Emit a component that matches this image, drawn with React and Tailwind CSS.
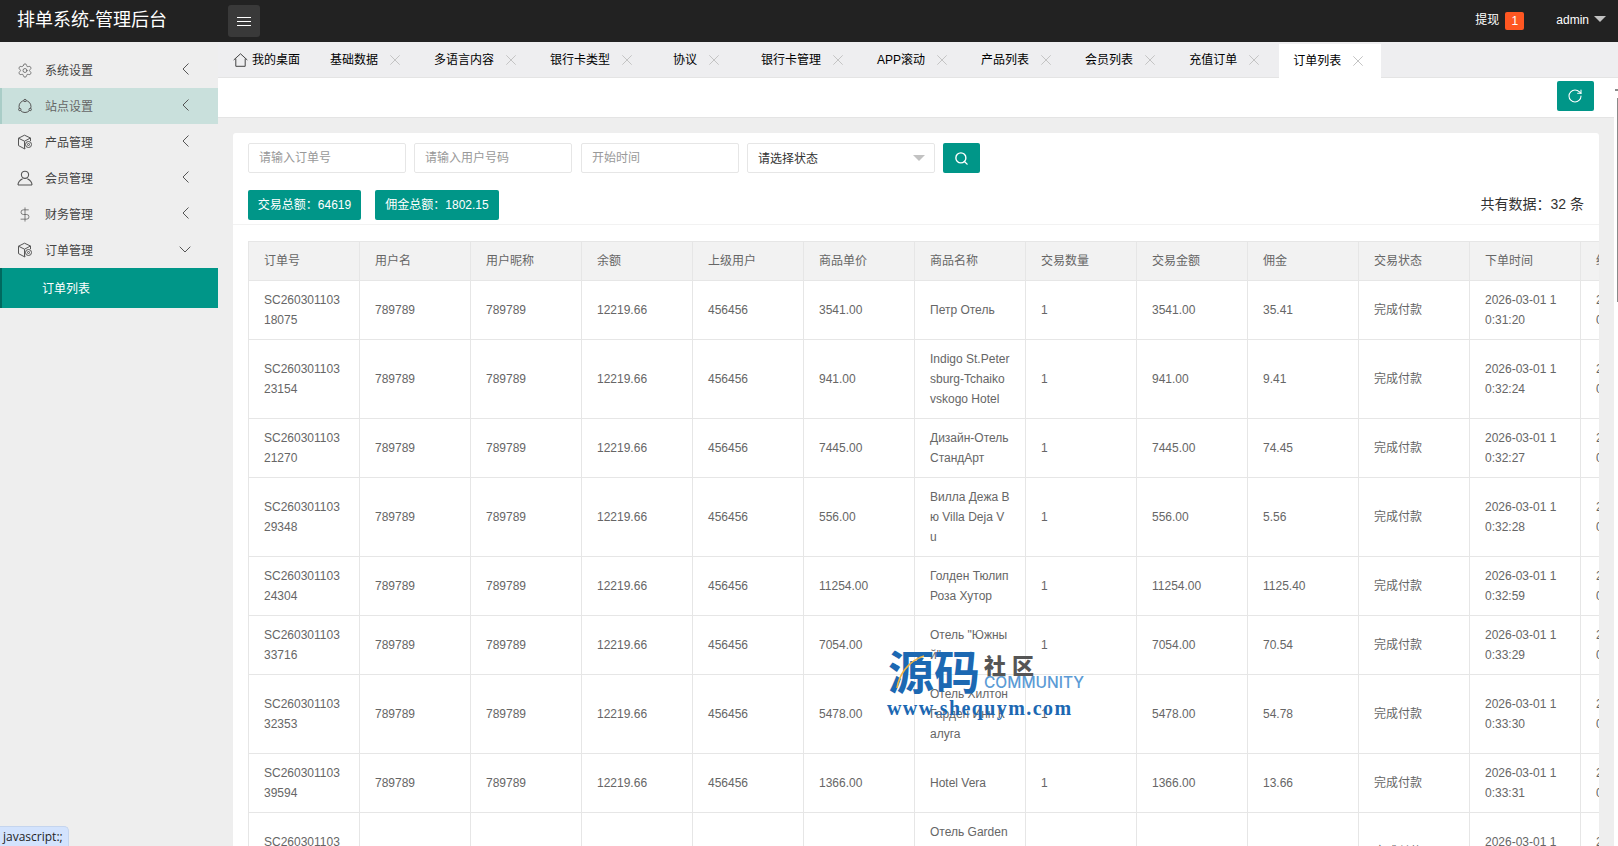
import React from "react";
import { Settings, DollarSign, RotateCw, Search } from "lucide-react";

const FONT = "font-['Liberation_Sans','Noto_Sans_CJK_SC',sans-serif]";

const BoxIcon = () => (
  <svg width="16" height="16" viewBox="0 0 16 16" fill="none" stroke="#555" strokeWidth="1">
    <path d="M1.5 4.2 7.5 1.2l6 2.8v3" />
    <path d="M1.5 4.2v7.4l6 3.2 1-.5" />
    <path d="M1.5 4.2l6 3v7.6" />
    <path d="M7.5 7.2l6-3.2" />
    <circle cx="11.5" cy="10.5" r="3" />
    <circle cx="11.5" cy="10.5" r="1" />
  </svg>
);

const NodesIcon = () => (
  <svg width="16" height="16" viewBox="0 0 16 16" fill="none" stroke="#555" strokeWidth="1">
    <circle cx="8" cy="8.5" r="6" />
    <circle cx="8" cy="2.5" r="1.2" fill="#c9e0dc" />
    <circle cx="2.8" cy="11.5" r="1.2" fill="#c9e0dc" />
    <circle cx="13.2" cy="11.5" r="1.2" fill="#c9e0dc" />
  </svg>
);

const UserIcon = () => (
  <svg width="16" height="16" viewBox="0 0 16 16" fill="none" stroke="#555" strokeWidth="1.1">
    <circle cx="8" cy="4.8" r="3.6" />
    <path d="M1 15c0-3.6 3-5.4 4.6-6.2M15 15c0-3.6-3-5.4-4.6-6.2M1 15h14" />
  </svg>
);

const HomeIcon = () => (
  <svg width="15" height="14" viewBox="0 0 15 14" fill="none" stroke="#444" strokeWidth="1">
    <path d="M.7 7 7.5.8 14.3 7" />
    <path d="M2.8 5.6v7.7h9.4V5.6" />
  </svg>
);

const CloseIcon = () => (
  <svg className="ml-3 shrink-0" width="10" height="10" viewBox="0 0 10 10" fill="none" stroke="#c4c4c4" strokeWidth="1">
    <path d="M.3.3l9.4 9.4M9.7.3.3 9.7" />
  </svg>
);

const ArrowLeft = () => (
  <svg width="7" height="12" viewBox="0 0 7 12" fill="none" stroke="#555" strokeWidth="1">
    <path d="M6.5.5 1 6l5.5 5.5" />
  </svg>
);

const ArrowDown = () => (
  <svg width="12" height="7" viewBox="0 0 12 7" fill="none" stroke="#555" strokeWidth="1">
    <path d="M.7.7 6 6l5.3-5.3" />
  </svg>
);

const menu = [
  { label: "系统设置", icon: <Settings size={17} strokeWidth={1.1} color="#555" /> },
  { label: "站点设置", icon: <NodesIcon />, active: true },
  { label: "产品管理", icon: <BoxIcon /> },
  { label: "会员管理", icon: <UserIcon /> },
  { label: "财务管理", icon: <DollarSign size={17} strokeWidth={1.1} color="#555" /> },
  { label: "订单管理", icon: <BoxIcon />, open: true },
];

const tabs = [
  { label: "基础数据", cls: "pl-[14px] pr-[18px]" },
  { label: "多语言内容", cls: "pl-[14px] pr-[18px]" },
  { label: "银行卡类型", cls: "pl-[14px] pr-[18px]" },
  { label: "协议", cls: "pl-[21px] pr-[26px]" },
  { label: "银行卡管理", cls: "pl-[14px] pr-[18px]" },
  { label: "APP滚动", cls: "pl-[14px] pr-[18px]" },
  { label: "产品列表", cls: "pl-[14px] pr-[18px]" },
  { label: "会员列表", cls: "pl-[14px] pr-[18px]" },
  { label: "充值订单", cls: "pl-[14px] pr-[18px]" },
  { label: "订单列表", cls: "pl-[14px] pr-[18px]", active: true },
];

const heads = ["订单号", "用户名", "用户昵称", "余额", "上级用户", "商品单价", "商品名称", "交易数量", "交易金额", "佣金", "交易状态", "下单时间", "结算时间"];

const rows = [
  ["18075", "3541.00", "Петр Отель", "35.41", "0:31:20"],
  ["23154", "941.00", "Indigo St.Peter\nsburg-Tchaiko\nvskogo Hotel", "9.41", "0:32:24"],
  ["21270", "7445.00", "Дизайн-Отель\nСтандАрт", "74.45", "0:32:27"],
  ["29348", "556.00", "Вилла Дежа В\nю Villa Deja V\nu", "5.56", "0:32:28"],
  ["24304", "11254.00", "Голден Тюлип\nРоза Хутор", "1125.40", "0:32:59"],
  ["33716", "7054.00", "Отель \"Южны\nй\"", "70.54", "0:33:29"],
  ["32353", "5478.00", "Отель Хилтон\nГарден Инн К\nалуга", "54.78", "0:33:30"],
  ["39594", "1366.00", "Hotel Vera", "13.66", "0:33:31"],
  ["31208", "2210.00", "Отель Garden\nRing\nMoscow", "22.10", "0:33:32"],
];

const th = "border border-[#e6e6e6] pl-[15px] pr-[15px] h-[39px] font-normal text-left text-[12px] text-[#666] bg-[#f2f2f2] whitespace-nowrap overflow-hidden";
const td = "border border-[#e6e6e6] pl-[15px] pr-[15px] py-[9px] text-[12px] leading-[20px] text-[#666] whitespace-pre overflow-hidden";

function Input({ placeholder, className }) {
  return (
    <input
      placeholder={placeholder}
      className={`h-[30px] w-[158px] rounded-[2px] border border-[#e6e6e6] bg-white pl-[10px] text-[12px] text-[#333] outline-none placeholder:text-[#999] ${className || ""}`}
    />
  );
}

export default function App() {
  return (
    <div className={`relative flex h-screen w-full flex-col overflow-hidden bg-white ${FONT}`}>
      <header className="flex h-[42px] shrink-0 items-center bg-[#222222] text-white">
        <div className="mb-[3px] w-[228px] shrink-0 pl-[17px] text-[18px] leading-[36px]">排单系统-管理后台</div>
        <button className="flex h-8 w-8 flex-col items-center justify-center gap-[3px] rounded-[3px] bg-[#393939]">
          <span className="h-[1px] w-[14px] bg-white" />
          <span className="h-[1px] w-[14px] bg-white" />
          <span className="h-[1px] w-[14px] bg-white" />
        </button>
        <div className="ml-auto flex items-center text-[12px]">
          <span className="mb-[2px]">提现</span>
          <span className="ml-[6px] flex h-[18px] w-[19px] items-center justify-center rounded-[2px] bg-[#ff5722] text-[12px] text-white">1</span>
          <span className="mb-[2px] ml-[32px]">admin</span>
          <span className="mb-[5px] ml-[5px] mr-[12px] h-0 w-0 border-x-[6px] border-t-[6px] border-x-transparent border-t-[#c2c2c2]" />
        </div>
      </header>

      <div className="flex min-h-0 flex-1">
        <aside className="w-[218px] shrink-0 bg-[#eeeeee] pt-[10px]">
          {menu.map((m) => (
            <div
              key={m.label}
              className={`flex h-9 items-center border-l-2 pl-[15px] text-[12px] ${m.active ? "border-[#a9cdc7] bg-[#c9e0dc] text-[#666]" : "border-transparent text-[#444]"}`}
            >
              <span className="flex w-4 items-center justify-center">{m.icon}</span>
              <span className="ml-[12px] mt-[1px]">{m.label}</span>
              <span className="mb-[2px] ml-auto mr-[27px] flex w-[12px] justify-center">
                {m.open ? <ArrowDown /> : <ArrowLeft />}
              </span>
            </div>
          ))}
          <div className="flex h-10 items-center border-l-2 border-[#00695f] bg-[#009688] pl-[40px] pt-[1px] text-[12px] text-white">订单列表</div>
        </aside>

        <main className="flex min-w-0 flex-1 flex-col">
          <nav className="flex h-9 shrink-0 items-stretch border-b border-[#e4e4e4] bg-[#eeeef0] text-[12px] text-black">
            <div className="mr-[2px] flex w-[96px] items-center pl-[15px]">
              <HomeIcon />
              <span className="ml-[4px]">我的桌面</span>
            </div>
            {tabs.map((t) => (
              <div
                key={t.label}
                className={`mr-[2px] flex items-center whitespace-nowrap ${t.cls} ${t.active ? "-mb-[1px] mt-[2px] bg-white" : ""}`}
              >
                <span>{t.label}</span>
                <CloseIcon />
              </div>
            ))}
          </nav>

          <div className="relative flex min-h-0 flex-1">
            <div className="flex min-w-0 flex-1 flex-col bg-[#eeeeee]">
              <div className="flex h-[40px] shrink-0 items-start justify-end border-b border-[#e4e4e4] bg-white pr-5 pt-[3px]">
                <button className="flex h-[30px] w-[37px] items-center justify-center rounded-[2px] bg-[#009688]">
                  <RotateCw size={16} strokeWidth={1.6} color="#fff" className="mr-[1px]" />
                </button>
              </div>

              <section className="ml-[15px] mr-[15px] mt-[15px] min-h-0 flex-1 overflow-hidden rounded-t-[3px] bg-white">
                <div className="flex gap-2 px-[15px] pt-[10px]">
                  <Input placeholder="请输入订单号" />
                  <Input placeholder="请输入用户号码" />
                  <Input placeholder="开始时间" className="ml-[1px]" />
                  <div className="flex h-[30px] w-[188px] items-center justify-between rounded-[2px] border border-[#e6e6e6] pl-[10px] pr-[9px] text-[12px] text-[#333]">
                    <span className="mt-[2px]">请选择状态</span>
                    <span className="h-0 w-0 border-x-[6px] border-t-[6px] border-x-transparent border-t-[#c2c2c2]" />
                  </div>
                  <button className="flex h-[30px] w-[37px] items-center justify-center rounded-[2px] bg-[#009688]">
                    <Search size={15} strokeWidth={2.2} color="#fff" />
                  </button>
                </div>

                <div className="mt-[17px] flex h-[35px] items-start border-b border-[#f2f2f2] px-[15px]">
                  <span className="flex h-[30px] w-[113px] items-center justify-center rounded-[2px] bg-[#009688] text-[12px] text-white">交易总额：64619</span>
                  <span className="ml-[14px] flex h-[30px] w-[124px] items-center justify-center rounded-[2px] bg-[#009688] text-[12px] text-white">佣金总额：1802.15</span>
                  <span className="ml-auto mt-[4px] text-[14px] leading-[20px] text-[#333]">共有数据：32 条</span>
                </div>

                <div className="ml-[15px] mt-[16px]">
                  <table className="w-[1444px] table-fixed border-collapse">
                    <thead>
                      <tr>
                        {heads.map((h) => (
                          <th key={h} className={th}>{h}</th>
                        ))}
                      </tr>
                    </thead>
                    <tbody>
                      {rows.map((r) => (
                        <tr key={r[0]}>
                          <td className={td}>{`SC260301103\n${r[0]}`}</td>
                          <td className={td}>789789</td>
                          <td className={td}>789789</td>
                          <td className={td}>12219.66</td>
                          <td className={td}>456456</td>
                          <td className={td}>{r[1]}</td>
                          <td className={td}>{r[2]}</td>
                          <td className={td}>1</td>
                          <td className={td}>{r[1]}</td>
                          <td className={td}>{r[3]}</td>
                          <td className={td}>完成付款</td>
                          <td className={td}>{`2026-03-01 1\n${r[4]}`}</td>
                          <td className={td}>{`2026-03-01 1\n${r[4]}`}</td>
                        </tr>
                      ))}
                    </tbody>
                  </table>
                </div>
              </section>
            </div>
            <div className="relative w-1 shrink-0 bg-white">
              <div className="absolute right-0 top-[11px] h-[2px] w-[3px] bg-[#8a8a8a]" />
              <div className="absolute right-0 top-[20px] h-[204px] w-[1px] bg-[#8a8a8a]" />
            </div>
          </div>
        </main>
      </div>

      {/* watermark logo */}
      <div className="pointer-events-none absolute left-[887px] top-[642px] w-[200px]">
        <div className="flex items-start pl-[1px]">
          <div className="relative w-[96px] font-['Noto_Sans_CJK_SC',sans-serif] text-[46px] font-bold leading-[54px] text-[#1c68b2]">
            源码
            <svg className="absolute left-[8px] top-[13px]" width="30" height="34" viewBox="0 0 30 34" fill="none">
              <path d="M1 33C3 20 12 6 28 1" stroke="#f0b541" strokeWidth="1.6" />
            </svg>
          </div>
          <div className="flex flex-col">
            <span className="mt-[10px] font-['Noto_Sans_CJK_SC',sans-serif] text-[22px] font-black leading-[24px] tracking-[6px] text-[#555]">社区</span>
            <span className="mt-[-1px] whitespace-nowrap font-['Inter',sans-serif] text-[15.5px] font-medium leading-[16px] text-[#5b9bd5]">COMMUNITY</span>
          </div>
        </div>
        <div className="mt-[2px] whitespace-nowrap font-['Liberation_Serif',serif] text-[20px] font-bold leading-[20px] tracking-[1.4px] text-[#1c68b2]">www.shequym.com</div>
      </div>

      {/* browser status bubble */}
      <div className="absolute bottom-0 left-0 flex h-[20px] w-[69px] items-center rounded-tr-[5px] border-r border-t border-[#c5d5ee] bg-[#d3e3fd] pl-[3px] pt-[1px] font-['Open_Sans',sans-serif] text-[12px] text-[#1f1f1f]">javascript:;</div>
    </div>
  );
}
